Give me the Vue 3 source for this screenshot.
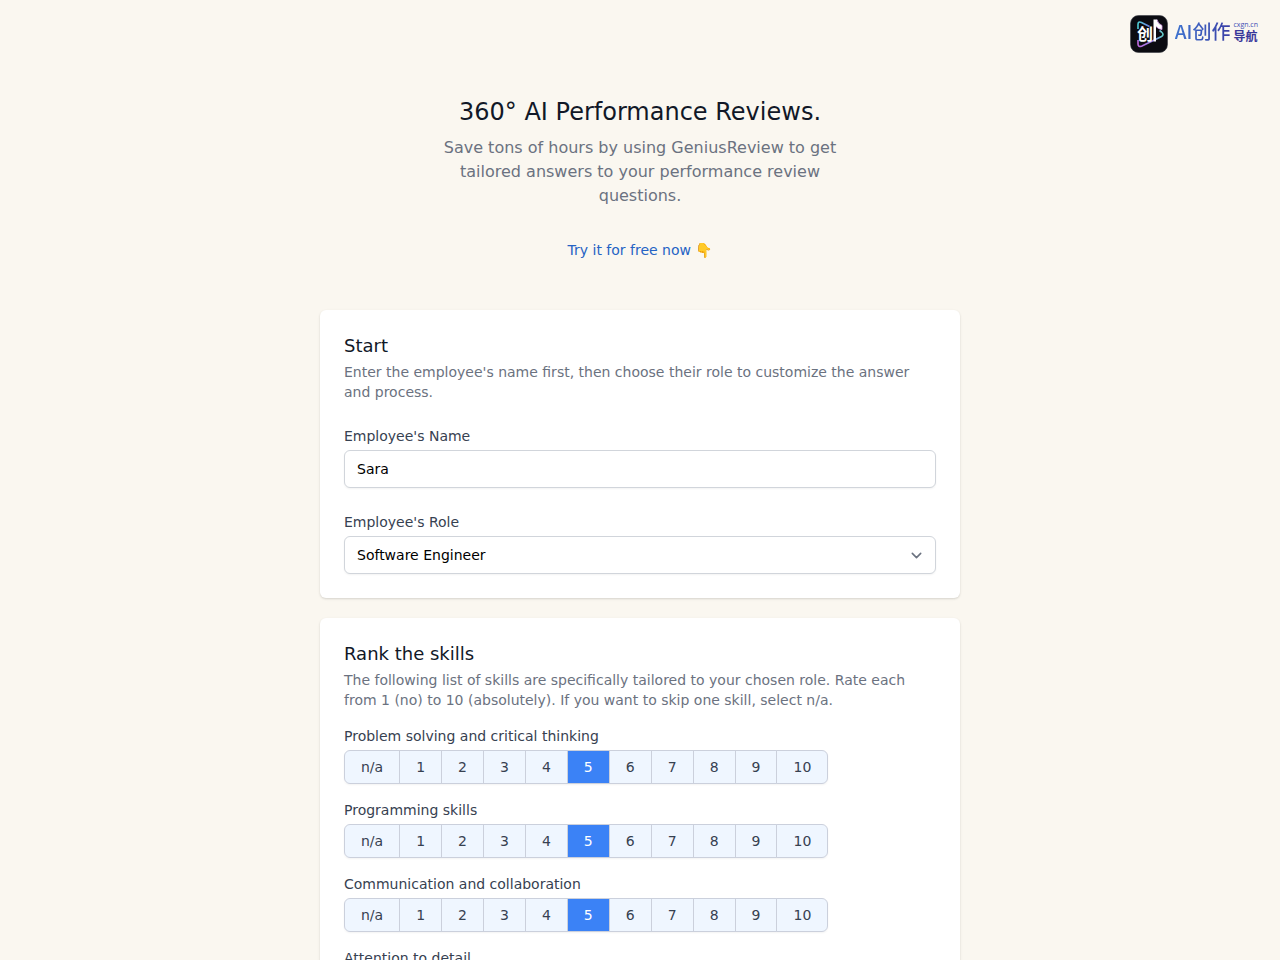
<template>
  <div class="page">
    <header class="topbar">
      <a class="brand" href="#">
        <svg class="brand-icon" viewBox="0 0 38 38" aria-hidden="true">
          <defs>
            <linearGradient id="neon" x1="0" y1="0" x2="1" y2="0">
              <stop offset="0" stop-color="#4fd0d6" />
              <stop offset="1" stop-color="#6f7fe0" />
            </linearGradient>
            <linearGradient id="neon-low" x1="0" y1="0" x2="1" y2="0">
              <stop offset="0" stop-color="#c06ae0" />
              <stop offset="0.6" stop-color="#8f86e6" />
              <stop offset="1" stop-color="#62d0c8" />
            </linearGradient>
          </defs>
          <rect x="0.5" y="0.5" width="37" height="37" rx="8" fill="#0b0c12" stroke="#3b3d44" stroke-width="0.6" />
          <path d="M8 14V9.500q0-3.500 3.500-2l8 4" fill="none" stroke="url(#neon)" stroke-width="1.6" />
          <path d="M8 25v4q0 3.500 4 2l19.500-9.500q3-2 0-4.500l-2-1.500" fill="none" stroke="url(#neon-low)" stroke-width="1.6" />
          <path d="M23.500 4.500h3.500q0.500 4 5 6v4q-4-0.500-6-3v15h-2.500z" fill="#fff" />
          <path d="M27 4.500q0.500 4 5 6v4q-4-0.500-6-3" fill="none" stroke="#d9a0ee" stroke-width="0.8" />
          <text x="7" y="25" class="brand-glyph">创</text>
        </svg>
        <span class="brand-name">AI创作</span>
        <span class="brand-side">
          <span class="brand-domain">cxgn.cn</span>
          <span class="brand-nav">导航</span>
        </span>
      </a>
    </header>

    <main>
      <section class="hero">
        <h1>360° AI Performance Reviews.</h1>
        <p>Save tons of hours by using GeniusReview to get tailored answers to your performance review questions.</p>
        <a class="try" href="#start">Try it for free now 👇</a>
      </section>

      <form class="cards" @submit.prevent>
        <section id="start" class="card">
          <h2>Start</h2>
          <p class="hint">Enter the employee's name first, then choose their role to customize the answer and process.</p>
          <div class="field">
            <label for="name">Employee's Name</label>
            <input id="name" v-model="name" class="control" type="text">
          </div>
          <div class="field">
            <label for="role">Employee's Role</label>
            <div class="select-wrap">
              <select id="role" v-model="role" class="control">
                <option v-for="item in roles" :key="item">{{ item }}</option>
              </select>
              <svg class="chevron" viewBox="0 0 20 20" aria-hidden="true">
                <path d="M6 8l4 4 4-4" fill="none" stroke="#6b7280" stroke-width="1.5" stroke-linecap="round" stroke-linejoin="round" />
              </svg>
            </div>
          </div>
        </section>

        <section class="card">
          <h2>Rank the skills</h2>
          <p class="hint">The following list of skills are specifically tailored to your chosen role. Rate each from 1 (no) to 10 (absolutely). If you want to skip one skill, select n/a.</p>
          <div class="skills">
            <fieldset v-for="(skill, index) in skills" :key="skill.title">
              <legend>{{ skill.title }}</legend>
              <div class="scale">
                <label v-for="grade in grades" :key="grade" :class="{ selected: skill.grade === grade }">
                  <input v-model="skill.grade" type="radio" :name="'skill-' + index" :value="grade">
                  {{ grade }}
                </label>
              </div>
            </fieldset>
          </div>
        </section>
      </form>
    </main>
  </div>
</template>

<script setup>
import { ref } from 'vue'

const name = ref('Sara')
const role = ref('Software Engineer')
const roles = ['Software Engineer']

const grades = ['n/a', '1', '2', '3', '4', '5', '6', '7', '8', '9', '10']
const skills = ref([
  { title: 'Problem solving and critical thinking', grade: '5' },
  { title: 'Programming skills', grade: '5' },
  { title: 'Communication and collaboration', grade: '5' },
  { title: 'Attention to detail', grade: '5' }
])
</script>

<style>
body {
  margin: 0;
  background: #faf7f0;
}
</style>

<style scoped>
* {
  box-sizing: border-box;
}

.page {
  font-family: "DejaVu Sans", "Noto Sans CJK SC", sans-serif;
  font-size: 14px;
  line-height: 20px;
  color: #374151;
}

h1,
h2,
p {
  margin: 0;
  font-weight: 400;
}

.topbar {
  display: flex;
  justify-content: flex-end;
  padding: 15px 22px 0;
}

.brand {
  display: flex;
  align-items: center;
  color: #3f4fb5;
  text-decoration: none;
}

.brand-icon {
  width: 38px;
  height: 38px;
  margin-right: 7px;
}

.brand-glyph {
  font: 700 16px "Noto Sans CJK SC", sans-serif;
  fill: #fff;
}

.brand-name {
  padding-bottom: 6px;
  margin-right: 3px;
  font: 500 19px/24px "Noto Sans CJK SC", sans-serif;
  color: transparent;
  background: linear-gradient(90deg, #3f74cf, #3a3fa6);
  background-clip: text;
}

.brand-side {
  display: flex;
  flex-direction: column;
  padding-bottom: 4px;
}

.brand-domain {
  font-family: "Open Sans", sans-serif;
  font-size: 7px;
  line-height: 8px;
}

.brand-nav {
  font-family: "Noto Sans CJK SC", sans-serif;
  font-size: 12px;
  font-weight: 700;
  line-height: 14px;
  color: #37369a;
}

.hero {
  display: flex;
  flex-direction: column;
  align-items: center;
  padding: 43px 24px 50px;
  text-align: center;
}

.hero h1 {
  font-size: 24px;
  line-height: 32px;
  color: #111827;
}

.hero p {
  max-width: 400px;
  margin: 8px 0 32px;
  font-size: 16px;
  line-height: 24px;
  color: #6b7280;
}

.try {
  color: #2563c4;
  text-decoration: none;
}

.cards {
  display: flex;
  flex-direction: column;
  gap: 20px;
  max-width: 640px;
  margin: 0 auto 40px;
}

.card {
  padding: 24px;
  background: #fff;
  border-radius: 6px;
  box-shadow: 0 1px 3px rgba(0, 0, 0, 0.1), 0 1px 2px rgba(0, 0, 0, 0.06);
}

.card h2 {
  font-size: 18px;
  line-height: 24px;
  color: #111827;
}

.hint {
  margin-top: 4px;
  color: #6b7280;
}

.field {
  display: flex;
  flex-direction: column;
  gap: 4px;
  margin-top: 24px;
}

.control {
  display: block;
  width: 100%;
  height: 38px;
  padding: 8px 12px;
  border: 1px solid #d1d5db;
  border-radius: 6px;
  background: #fff;
  box-shadow: 0 1px 2px rgba(0, 0, 0, 0.05);
  color: #000;
  font: inherit;
  appearance: none;
}

.select-wrap {
  position: relative;
}

.chevron {
  position: absolute;
  top: 9px;
  right: 9px;
  width: 21px;
  height: 21px;
  pointer-events: none;
}

.skills {
  display: flex;
  flex-direction: column;
  gap: 16px;
  margin-top: 16px;
}

fieldset {
  min-width: 0;
  margin: 0;
  padding: 0;
  border: 0;
}

legend {
  padding: 0 0 4px;
}

.scale {
  display: flex;
  width: fit-content;
  border-radius: 6px;
  box-shadow: 0 1px 2px rgba(0, 0, 0, 0.05);
}

.scale label {
  position: relative;
  padding: 6px 16px;
  border: 1px solid #cbd0dc;
  background: #eff6ff;
  cursor: pointer;
}

.scale label + label {
  margin-left: -1px;
}

.scale label:first-child {
  border-radius: 6px 0 0 6px;
}

.scale label:last-child {
  border-radius: 0 6px 6px 0;
}

.scale label.selected {
  background: #3b82f6;
  color: #fff;
}

.scale input {
  position: absolute;
  inset: 0;
  margin: 0;
  opacity: 0;
  cursor: pointer;
}
</style>
